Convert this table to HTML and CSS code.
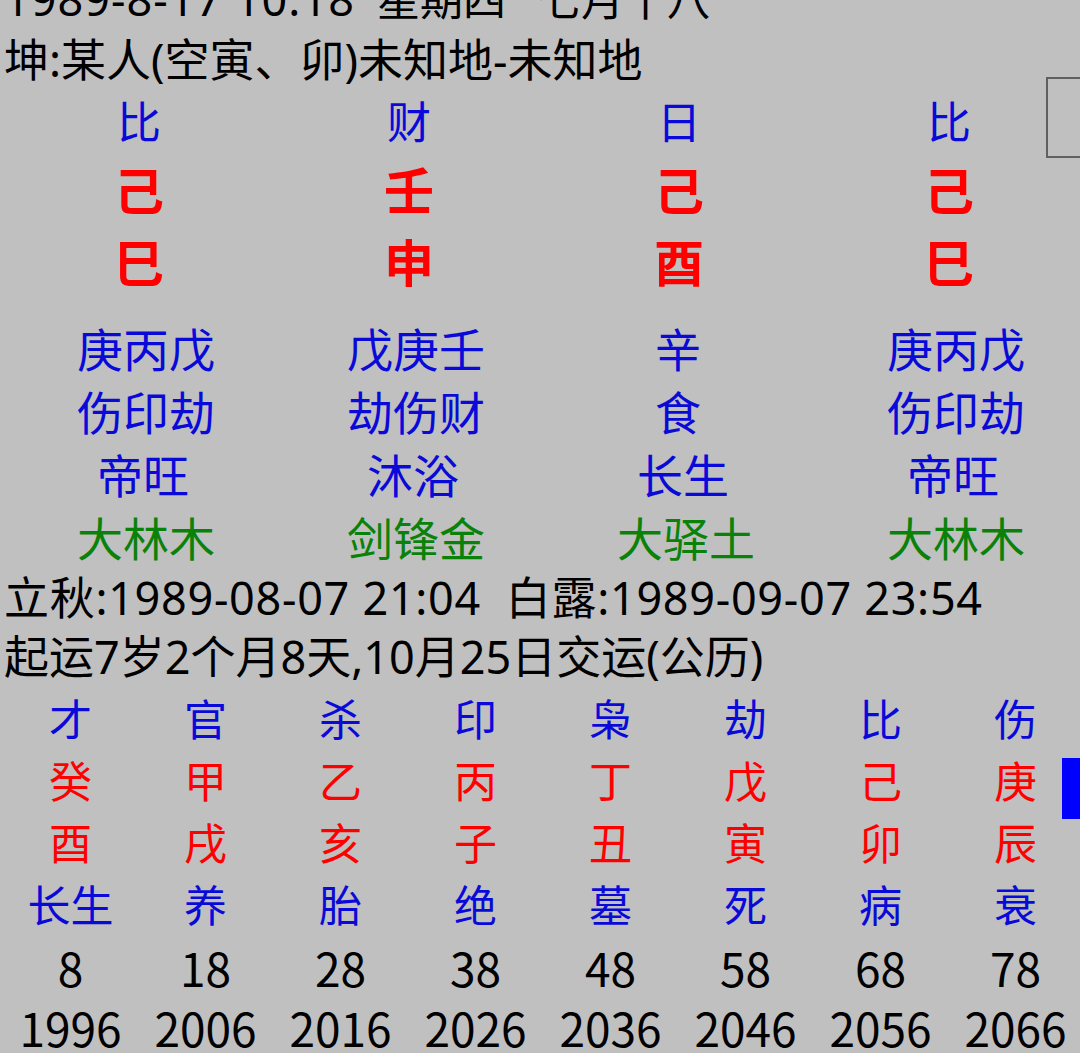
FILE: index.html
```html
<!DOCTYPE html>
<html lang="zh-CN">
<head>
<meta charset="utf-8">
<title>八字排盘</title>
<link rel="stylesheet" href="styles.css">
</head>
<body>
<div class="page">
  <div class="info">
    <div class="line line-date">1989-8-17 10:18<span class="gap">星期四</span><span class="gap">七月十八</span></div>
    <div class="line">坤:某人(空寅、卯)未知地-未知地</div>
  </div>

  <div class="pillars">
    <div class="row row-god"><span class="blue">比</span><span class="blue">财</span><span class="blue">日</span><span class="blue">比</span></div>
    <div class="row row-stem"><span class="red">己</span><span class="red">壬</span><span class="red">己</span><span class="red">己</span></div>
    <div class="row row-branch"><span class="red">巳</span><span class="red">申</span><span class="red">酉</span><span class="red">巳</span></div>
    <div class="row row-sub first"><span class="blue n3">庚丙戊</span><span class="blue n3">戊庚壬</span><span class="blue n1">辛</span><span class="blue n3">庚丙戊</span></div>
    <div class="row row-sub"><span class="blue n3">伤印劫</span><span class="blue n3">劫伤财</span><span class="blue n1">食</span><span class="blue n3">伤印劫</span></div>
    <div class="row row-sub"><span class="blue n2">帝旺</span><span class="blue n2">沐浴</span><span class="blue n2">长生</span><span class="blue n2">帝旺</span></div>
    <div class="row row-sub"><span class="green n3">大林木</span><span class="green n3">剑锋金</span><span class="green n3">大驿土</span><span class="green n3">大林木</span></div>
  </div>

  <div class="info">
    <div class="line line-terms">立秋:1989-08-07 21:04&nbsp; 白露:1989-09-07 23:54</div>
    <div class="line">起运7岁2个月8天,10月25日交运(公历)</div>
  </div>

  <div class="luck">
    <div class="lrow"><span class="blue">才</span><span class="blue">官</span><span class="blue">杀</span><span class="blue">印</span><span class="blue">枭</span><span class="blue">劫</span><span class="blue">比</span><span class="blue">伤</span></div>
    <div class="lrow"><span class="red">癸</span><span class="red">甲</span><span class="red">乙</span><span class="red">丙</span><span class="red">丁</span><span class="red">戊</span><span class="red">己</span><span class="red">庚</span></div>
    <div class="lrow"><span class="red">酉</span><span class="red">戌</span><span class="red">亥</span><span class="red">子</span><span class="red">丑</span><span class="red">寅</span><span class="red">卯</span><span class="red">辰</span></div>
    <div class="lrow"><span class="blue">长生</span><span class="blue">养</span><span class="blue">胎</span><span class="blue">绝</span><span class="blue">墓</span><span class="blue">死</span><span class="blue">病</span><span class="blue">衰</span></div>
    <div class="lrow num age"><span>8</span><span>18</span><span>28</span><span>38</span><span>48</span><span>58</span><span>68</span><span>78</span></div>
    <div class="lrow num"><span>1996</span><span>2006</span><span>2016</span><span>2026</span><span>2036</span><span>2046</span><span>2056</span><span>2066</span></div>
  </div>

  <div class="thumb-box"></div>
  <div class="thumb-bar"></div>
</div>
</body>
</html>
```

FILE: styles.css
```css
html, body {
  margin: 0;
  padding: 0;
  background: #c0c0c0;
  height: 100%;
  overflow: hidden;
}

.page {
  position: relative;
  width: 1080px;
  height: 1053px;
  overflow: hidden;
  font-family: "Noto Sans CJK SC", "Noto Sans", sans-serif;
  color: #000;
}

.info {
  padding-left: 4px;
}

.line {
  font-size: 45px;
  line-height: 59px;
  height: 59px;
  white-space: nowrap;
  font-family: "Noto Sans", "Noto Sans CJK SC", sans-serif;
}

.line-date {
  margin-top: -29px;
  line-height: 55px;
  letter-spacing: 1px;
}

.line-date .gap {
  margin-left: 22px;
  font-size: 43px;
  letter-spacing: 0;
}

.line-date .gap + .gap {
  margin-left: 32px;
}

.line-terms {
  letter-spacing: 0.7px;
}

.blue { color: #0a0ad8; }
.red { color: #f00; }
.green { color: #0a820a; }

.pillars {
  padding-left: 4px;
  display: flex;
  flex-direction: column;
}

.row {
  display: grid;
  grid-template-columns: repeat(4, 270px);
  justify-items: center;
  white-space: nowrap;
}

.row-god {
  font-size: 44px;
  height: 63px;
  line-height: 63px;
}

.row-stem,
.row-branch {
  font-size: 50px;
  font-weight: 700;
  line-height: 72px;
  height: 72px;
}

.row-branch {
  height: 70px;
  line-height: 72px;
}

.row-sub {
  font-size: 46px;
  height: 63px;
  line-height: 63px;
}

.row-sub .n1 { margin-right: 2px; }
.row-sub .n2 { margin-left: 8px; }
.row-sub .n3 { margin-left: 14px; }

.row-sub.first {
  margin-top: 22px;
}

.luck {
  padding-left: 3px;
}

.lrow {
  display: grid;
  grid-template-columns: repeat(8, 135px);
  justify-items: center;
  font-size: 43px;
  height: 62px;
  line-height: 62px;
  white-space: nowrap;
}

.lrow.num {
  font-size: 46px;
}

.lrow.age {
  line-height: 66px;
}

.thumb-box {
  position: absolute;
  left: 1046px;
  top: 77px;
  width: 40px;
  height: 77px;
  border: 2px solid #606060;
}

.thumb-bar {
  position: absolute;
  left: 1062px;
  top: 758px;
  width: 18px;
  height: 61px;
  background: #0000ff;
}
```
